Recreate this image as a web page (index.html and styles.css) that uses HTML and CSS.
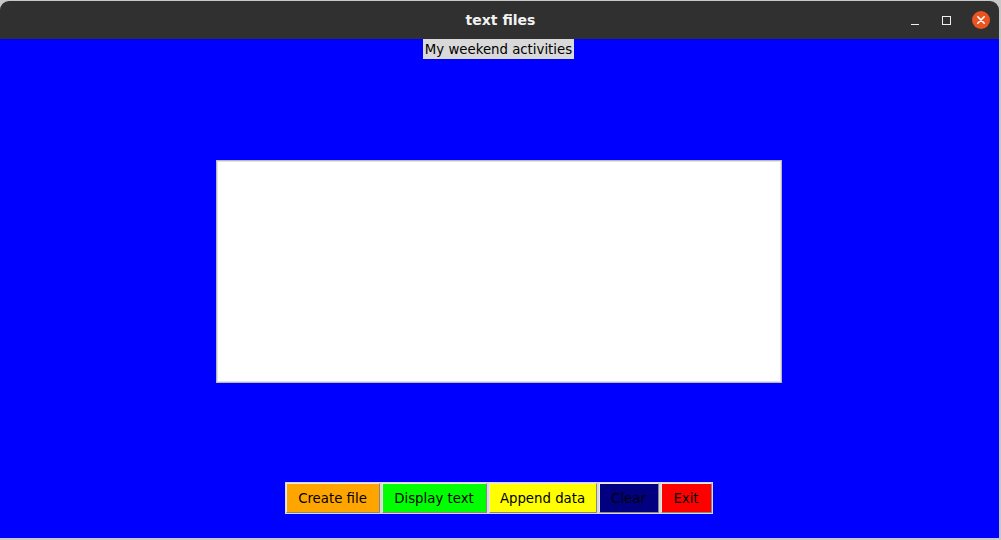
FILE: index.html
```html
<!DOCTYPE html>
<html>
<head>
<meta charset="utf-8">
<link rel="stylesheet" href="styles.css">
</head>
<body>
<div class="window">
  <div class="titlebar">
    <div class="title">text files</div>
    <div class="controls">
      <span class="ctl min"></span>
      <span class="ctl max"></span>
      <span class="ctl close">
        <svg width="18" height="18" viewBox="0 0 18 18"><circle cx="9" cy="9" r="9" fill="#e95420"/><path d="M5.8 5.8 L12.2 12.2 M12.2 5.8 L5.8 12.2" stroke="#fff" stroke-width="1.6" stroke-linecap="round"/></svg>
      </span>
    </div>
  </div>
  <div class="content">
    <div class="label">My weekend activities</div>
    <div class="textbox"></div>
    <div class="buttons">
      <div class="btn orange">Create file</div>
      <div class="btn green">Display text</div>
      <div class="btn yellow">Append data</div>
      <div class="btn navy">Clear</div>
      <div class="btn red">Exit</div>
    </div>
  </div>
</div>
</body>
</html>
```
FILE: styles.css
```css
html, body {
  margin: 0;
  padding: 0;
}
body {
  background: #c8c8c8;
  width: 1001px;
  height: 540px;
  overflow: hidden;
  font-family: "DejaVu Sans", sans-serif;
}
.window {
  width: 999px;
  height: 538px;
  display: flex;
  flex-direction: column;
}
.titlebar {
  height: 38px;
  margin-top: 1px;
  background: #303030;
  border-radius: 9px 9px 0 0;
  position: relative;
  display: flex;
  align-items: center;
  justify-content: center;
}
.title {
  color: #f2f2f2;
  font-weight: bold;
  font-size: 14px;
  margin-left: 2px;
}
.controls {
  position: absolute;
  right: 9px;
  top: 10px;
  display: flex;
  align-items: center;
}
.ctl {
  display: block;
}
.min {
  width: 8px;
  height: 1px;
  background: #eee;
  margin-top: 8px;
  margin-right: 23px;
}
.max {
  width: 7px;
  height: 7px;
  border: 1px solid #eee;
  margin-right: 21px;
}
.close {
  width: 18px;
  height: 18px;
}
.close svg {
  display: block;
}
.content {
  flex: 1;
  background: #0000ff;
  display: flex;
  flex-direction: column;
  align-items: center;
}
.label {
  background: #d9d9d9;
  color: #000;
  font-size: 13.3px;
  height: 20px;
  line-height: 22px;
  padding: 0 2px;
  margin-left: -2px;
}
.textbox {
  width: 564px;
  height: 221px;
  background: #fff;
  border: 1px solid #b8b8b8;
  box-shadow: 0 0 0 1px #e4e4e4 inset;
  margin-top: 101px;
  margin-left: -1px;
}
.buttons {
  margin-top: 99px;
  margin-left: -2px;
  display: flex;
  gap: 2px;
  padding: 1px;
  background: #d9d9d9;
  height: 30px;
}
.btn {
  height: 28px;
  line-height: 29px;
  font-size: 13.3px;
  color: #000;
  text-align: center;
  border: 1px solid #e8e8e8;
  border-right-color: #888;
  border-bottom-color: #888;
}
.orange { background: #ffa500; width: 92px; }
.green { background: #00ff00; width: 103px; }
.yellow { background: #ffff00; width: 106px; }
.navy { background: #000080; width: 58px; }
.red { background: #ff0000; width: 49px; }
```
